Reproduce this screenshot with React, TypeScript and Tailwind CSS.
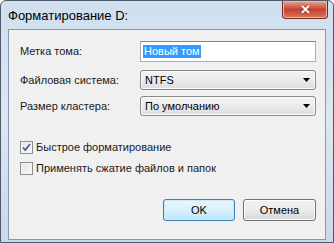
import React from "react"

const font = { fontFamily: '"Liberation Sans", Arial, sans-serif' }

function Arrow() {
  return (
    <svg width="7" height="4" viewBox="0 0 7 4" className="shrink-0">
      <path d="M0 0h7L3.5 4z" fill="#000" />
    </svg>
  )
}

function Combo({ value }: { value: string }) {
  return (
    <div className="flex h-[20px] flex-1 items-center justify-between rounded-[3px] border border-[#8a8a8a] bg-gradient-to-b from-[#f3f3f3] via-[#ebebeb] to-[#dddddd] pl-[4px] pr-[5px] shadow-[inset_0_0_0_1px_#fafafa]">
      <span className="text-[11px] leading-none text-black">{value}</span>
      <Arrow />
    </div>
  )
}

function Check({ checked, label }: { checked?: boolean; label: string }) {
  return (
    <div className="flex items-center gap-[3px]">
      <div className="flex h-[13px] w-[13px] items-center justify-center border border-[#8e8f8f] bg-gradient-to-br from-[#e4e4e4] to-[#fbfbfb] shadow-[inset_0_0_0_1px_#f4f4f4]">
        {checked && (
          <svg width="9" height="9" viewBox="0 0 9 9">
            <path d="M1 4.5l2.3 2.6L8 1" fill="none" stroke="#4a5f97" strokeWidth="1.8" />
          </svg>
        )}
      </div>
      <span className="text-[11px] leading-none text-[#1a1a1a]">{label}</span>
    </div>
  )
}

export default function App() {
  return (
    <div
      style={font}
      className="relative h-[243px] w-[334px] overflow-hidden rounded-t-[6px] border border-[#4d5b6b] bg-gradient-to-b from-[#cfdfee] via-[#dce7f2] to-[#c9d9e9]"
    >
      {/* title bar */}
      <div className="flex h-[28px] items-start justify-between pl-[7px]">
        <span className="mt-[7px] text-[13px] leading-[16px] text-black">Форматирование D:</span>
        <div className="mr-[5px] flex h-[18px] w-[46px] items-center justify-center rounded-b-[4px] border border-t-0 border-[#6d2a22] bg-gradient-to-b from-[#e9a595] via-[#c7402f] to-[#d9745a] shadow-[inset_0_0_0_1px_#f0b8a8]">
          <span className="text-[13px] font-bold leading-none text-white [text-shadow:0_0_2px_#5a1a10]">✕</span>
        </div>
      </div>

      {/* client area */}
      <div className="mx-[7px] flex h-[211px] flex-col border border-[#8799ae] bg-[#f0f0f0] pl-[11px] pr-[9px] pt-[11px]">
        <div className="flex items-center">
          <span className="w-[120px] text-[11px] text-[#1a1a1a]">Метка тома:</span>
          <div className="flex h-[21px] flex-1 items-center border border-[#abadb3] border-t-[#7a8a9a] bg-white pl-[2px]">
            <span className="bg-[#3399ff] px-[1px] py-[1px] text-[11px] leading-[11px] text-white">Новый том</span>
          </div>
        </div>
        <div className="mt-[8px] flex items-center">
          <span className="w-[120px] text-[11px] text-[#1a1a1a]">Файловая система:</span>
          <Combo value="NTFS" />
        </div>
        <div className="mt-[6px] flex items-center">
          <span className="w-[120px] text-[11px] text-[#1a1a1a]">Размер кластера:</span>
          <Combo value="По умолчанию" />
        </div>

        <div className="mt-[25px] flex flex-col gap-[8px]">
          <Check checked label="Быстрое форматирование" />
          <Check label="Применять сжатие файлов и папок" />
        </div>

        <div className="mt-[24px] flex justify-end gap-[8px]">
          <div className="flex h-[22px] w-[72px] items-center justify-center rounded-[3px] border border-[#3c7fb1] bg-gradient-to-b from-[#eaf6fd] via-[#d9f0fc] to-[#bee6fd] shadow-[inset_0_0_0_1px_#c8ebfb]">
            <span className="text-[11px] text-black">OK</span>
          </div>
          <div className="flex h-[22px] w-[73px] items-center justify-center rounded-[3px] border border-[#707070] bg-gradient-to-b from-[#f2f2f2] via-[#ebebeb] to-[#d6d6d6] shadow-[inset_0_0_0_1px_#fcfcfc]">
            <span className="text-[11px] text-black">Отмена</span>
          </div>
        </div>
      </div>
    </div>
  )
}
